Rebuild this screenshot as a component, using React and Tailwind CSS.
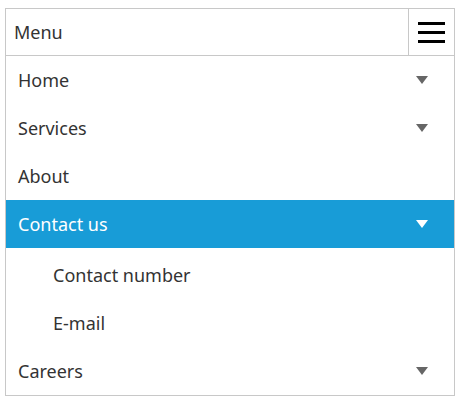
import { useState } from 'react';

const items = [
  { label: 'Home', children: [] },
  { label: 'Services', children: [] },
  { label: 'About' },
  { label: 'Contact us', children: ['Contact number', 'E-mail'] },
  { label: 'Careers', children: [] },
];

const Caret = ({ white }) => (
  <svg width="12" height="8" viewBox="0 0 12 8" className={white ? 'fill-white' : 'fill-[#666666]'}>
    <path d="M0 0h12L6 8z" />
  </svg>
);

const App = () => {
  const [open] = useState('Contact us');

  return (
    <div className="pt-2 px-[5px] font-['Noto_Sans',sans-serif] text-[18px] text-[#333333]">
      <div className="w-[450px] border border-[#c8c8c8]">
        <div className="flex h-[47px] border-b border-[#c8c8c8]">
          <div className="flex-1 flex items-center pl-2">Menu</div>
          <button className="w-[46px] border-l border-[#c8c8c8] flex flex-col items-center justify-center gap-[6px] pr-px">
            <span className="block w-[27px] h-[3px] bg-black" />
            <span className="block w-[27px] h-[3px] bg-black" />
            <span className="block w-[27px] h-[3px] bg-black" />
          </button>
        </div>
        <ul>
          {items.map((item) => {
            const active = open === item.label;
            return (
              <li key={item.label}>
                <div
                  className={`flex items-center justify-between h-12 pl-3 pr-[26px] ${
                    active ? 'bg-[#189cd7] text-white' : ''
                  }`}
                >
                  <span>{item.label}</span>
                  {item.children && <Caret white={active} />}
                </div>
                {active && item.children.length > 0 && (
                  <ul className="pt-[3px]">
                    {item.children.map((c) => (
                      <li key={c} className="flex items-center h-12 pl-[47px]">
                        {c}
                      </li>
                    ))}
                  </ul>
                )}
              </li>
            );
          })}
        </ul>
      </div>
    </div>
  );
};

export default App;
